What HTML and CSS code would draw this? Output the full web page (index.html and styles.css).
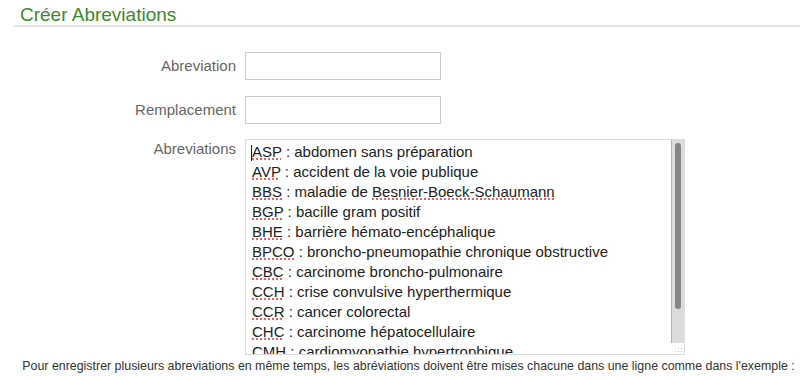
FILE: index.html
```html
<!DOCTYPE html>
<html lang="fr">
<head>
<meta charset="utf-8">
<title>Créer Abreviations</title>
<link rel="stylesheet" href="styles.css">
</head>
<body>
<div class="page">
  <h1 class="title">Créer Abreviations</h1>
  <form class="form">
    <div class="row">
      <label class="label">Abreviation</label>
      <div class="input"></div>
    </div>
    <div class="row row-second">
      <label class="label">Remplacement</label>
      <div class="input"></div>
    </div>
    <div class="row row-top">
      <label class="label">Abreviations</label>
      <div class="area">
        <div class="area-text">
          <div class="line"><span class="caret"></span><span class="abbr">ASP</span> : abdomen sans préparation</div>
          <div class="line"><span class="abbr">AVP</span> : accident de la voie publique</div>
          <div class="line"><span class="abbr">BBS</span> : maladie de <span class="abbr">Besnier-Boeck-Schaumann</span></div>
          <div class="line"><span class="abbr">BGP</span> : bacille gram positif</div>
          <div class="line"><span class="abbr">BHE</span> : barrière hémato-encéphalique</div>
          <div class="line"><span class="abbr">BPCO</span> : broncho-pneumopathie chronique obstructive</div>
          <div class="line"><span class="abbr">CBC</span> : carcinome broncho-pulmonaire</div>
          <div class="line"><span class="abbr">CCH</span> : crise convulsive hyperthermique</div>
          <div class="line"><span class="abbr">CCR</span> : cancer colorectal</div>
          <div class="line"><span class="abbr">CHC</span> : carcinome hépatocellulaire</div>
          <div class="line"><span class="abbr">CMH</span> : cardiomyopathie hypertrophique</div>
        </div>
        <div class="scrollbar"><div class="thumb"></div></div>
        <div class="grip"></div>
      </div>
    </div>
  </form>
  <p class="note">Pour enregistrer plusieurs abreviations en même temps, les abréviations doivent être mises chacune dans une ligne comme dans l'exemple :</p>
</div>
</body>
</html>
```

FILE: styles.css
```css
html, body {
  margin: 0;
  padding: 0;
  background: #fff;
}
body {
  font-family: "Liberation Sans", Arial, sans-serif;
  color: #333;
}
.page {
  padding-left: 14px;
}
.title {
  margin: 0;
  padding: 4px 0 0 6px;
  height: 21px;
  font-size: 19px;
  font-weight: normal;
  color: #3d8a2c;
  line-height: 21px;
  border-bottom: 2px solid #e2e2e2;
}
.form {
  margin: 0;
  padding-top: 25px;
}
.row {
  display: grid;
  grid-template-columns: 222px 440px;
  column-gap: 9px;
  align-items: center;
  margin-bottom: 16px;
}
.row-second {
  margin-bottom: 15px;
}
.row-top {
  align-items: start;
  margin-bottom: 0;
}
.label {
  text-align: right;
  font-size: 15px;
  color: #666;
  line-height: 18px;
}
.row-top .label {
  padding-top: 1px;
}
.input {
  width: 194px;
  height: 26px;
  border: 1px solid #ccc;
  background: #fff;
}
.area {
  position: relative;
  width: 438px;
  height: 214px;
  border: 1px solid #ddd;
  overflow: hidden;
  background: #fff;
}
.area-text {
  padding: 2px 0 0 6px;
  font-size: 15px;
  line-height: 20px;
  color: #222;
}
.line {
  white-space: nowrap;
  position: relative;
}
.abbr {
  text-decoration: underline dotted #e23030;
  text-underline-offset: 2px;
}
.caret {
  position: absolute;
  left: -1px;
  top: 3px;
  width: 1px;
  height: 16px;
  background: #222;
}
.scrollbar {
  position: absolute;
  right: 0;
  top: 0;
  width: 12px;
  height: 203px;
  background: #dcdcdc;
  border-left: 1px solid #b4b4b4;
}
.thumb {
  margin: 3px 0 0 3px;
  width: 6px;
  height: 166px;
  background: #858585;
  border-radius: 3px;
}
.grip {
  position: absolute;
  right: 1px;
  bottom: 1px;
  width: 9px;
  height: 9px;
  background-image: radial-gradient(circle, #bbb 0.7px, transparent 0.8px);
  background-size: 3px 3px;
  clip-path: polygon(100% 0, 100% 100%, 0 100%);
}
.note {
  margin: 4px 0 0 3px;
  text-align: center;
  font-size: 12.4px;
  line-height: 14px;
  color: #333;
  white-space: nowrap;
}
```
